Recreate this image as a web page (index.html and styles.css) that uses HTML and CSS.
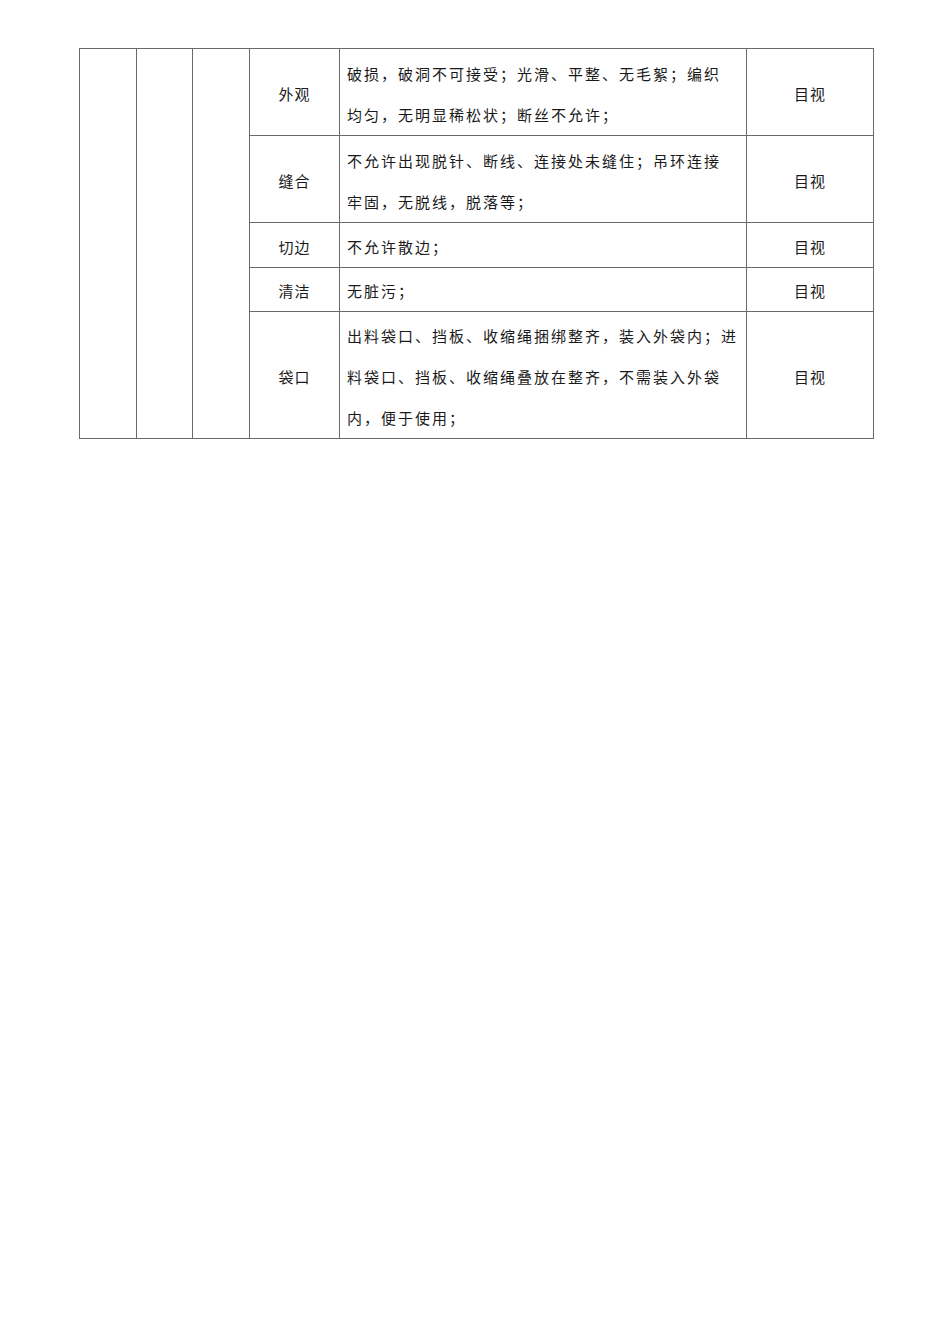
FILE: index.html
```html
<!DOCTYPE html>
<html lang="zh-CN">
<head>
<meta charset="utf-8">
<title>检验标准</title>
<link rel="stylesheet" href="styles.css">
</head>
<body>
<div class="page">
  <table class="spec">
    <colgroup>
      <col class="c1"><col class="c2"><col class="c3"><col class="c4"><col class="c5"><col class="c6">
    </colgroup>
    <tr class="r2">
      <td rowspan="5"></td>
      <td rowspan="5"></td>
      <td rowspan="5"></td>
      <td class="item">外观</td>
      <td class="desc">破损，破洞不可接受；光滑、平整、无毛絮；编织<br>均匀，无明显稀松状；断丝不允许；</td>
      <td class="method">目视</td>
    </tr>
    <tr class="r2">
      <td class="item">缝合</td>
      <td class="desc">不允许出现脱针、断线、连接处未缝住；吊环连接<br>牢固，无脱线，脱落等；</td>
      <td class="method">目视</td>
    </tr>
    <tr class="r1a">
      <td class="item">切边</td>
      <td class="desc">不允许散边；</td>
      <td class="method">目视</td>
    </tr>
    <tr class="r1b">
      <td class="item">清洁</td>
      <td class="desc">无脏污；</td>
      <td class="method">目视</td>
    </tr>
    <tr class="r3">
      <td class="item">袋口</td>
      <td class="desc">出料袋口、挡板、收缩绳捆绑整齐，装入外袋内；进<br>料袋口、挡板、收缩绳叠放在整齐，不需装入外袋<br>内，便于使用；</td>
      <td class="method">目视</td>
    </tr>
  </table>
</div>
</body>
</html>
```

FILE: styles.css
```css
html, body {
  margin: 0;
  padding: 0;
  background: #ffffff;
}

.page {
  padding: 48px 0 0 79px;
  font-family: "Noto Sans CJK SC", "Noto Sans", sans-serif;
  color: #1a1a1a;
}

.spec {
  border-collapse: collapse;
  table-layout: fixed;
  width: 794px;
}

.spec col.c1 { width: 57px; }
.spec col.c2 { width: 56px; }
.spec col.c3 { width: 57px; }
.spec col.c4 { width: 90px; }
.spec col.c5 { width: 407px; }
.spec col.c6 { width: 127px; }

.spec td {
  border: 1px solid #6a6a6a;
  padding: 3px 7px 0 7px;
  font-size: 15px;
  line-height: 41px;
  letter-spacing: 2px;
  vertical-align: middle;
  white-space: nowrap;
}

.spec .item,
.spec .method {
  text-align: center;
  letter-spacing: 1px;
}

.spec .desc {
  text-align: left;
}

.r2 { height: 87px; }
.r1a { height: 45px; }
.r1b { height: 44px; }
.r1b td { line-height: 40px; }
.r3 { height: 127px; }
```
